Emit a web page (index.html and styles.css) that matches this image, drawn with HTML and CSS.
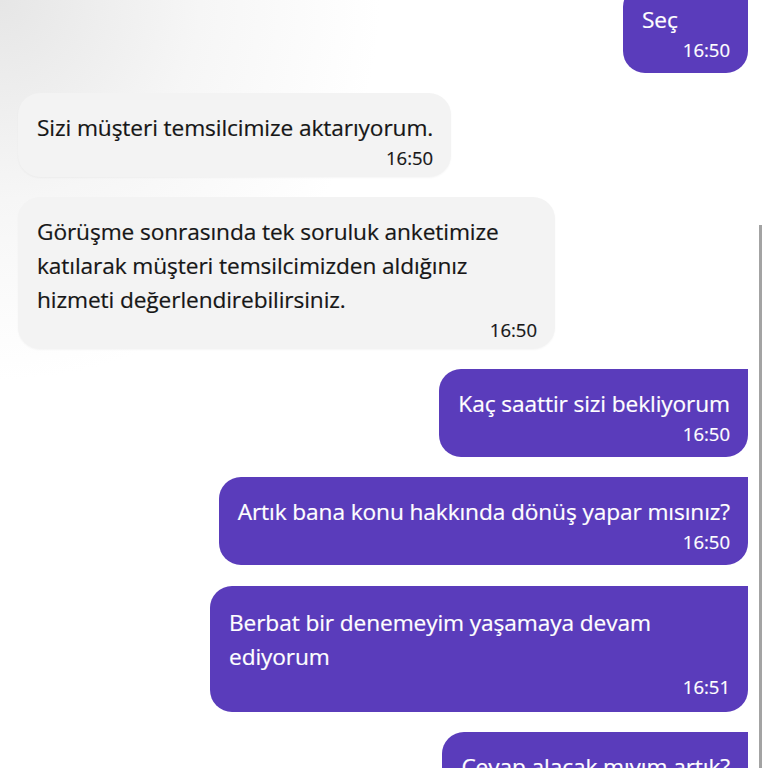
FILE: index.html
```html
<!DOCTYPE html>
<html lang="tr">
<head>
<meta charset="utf-8">
<title>Sohbet</title>
<link rel="stylesheet" href="styles.css">
</head>
<body>
<div class="chat">
  <div class="msg sent">
    <div class="bubble short"><p class="text">Seç</p><div class="time">16:50</div></div>
  </div>
  <div class="msg recv">
    <div class="bubble"><p class="text">Sizi müşteri temsilcimize aktarıyorum.</p><div class="time">16:50</div></div>
  </div>
  <div class="msg recv">
    <div class="bubble wide-recv"><p class="text">Görüşme sonrasında tek soruluk anketimize katılarak müşteri temsilcimizden aldığınız hizmeti değerlendirebilirsiniz.</p><div class="time">16:50</div></div>
  </div>
  <div class="msg sent">
    <div class="bubble"><p class="text">Kaç saattir sizi bekliyorum</p><div class="time">16:50</div></div>
  </div>
  <div class="msg sent">
    <div class="bubble"><p class="text">Artık bana konu hakkında dönüş yapar mısınız?</p><div class="time">16:50</div></div>
  </div>
  <div class="msg sent">
    <div class="bubble wide-sent"><p class="text">Berbat bir denemeyim yaşamaya devam ediyorum</p><div class="time">16:51</div></div>
  </div>
  <div class="msg sent">
    <div class="bubble"><p class="text">Cevap alacak mıyım artık?</p><div class="time">16:51</div></div>
  </div>
</div>
<div class="scrollbar"></div>
</body>
</html>
```

FILE: styles.css
```css
html, body {
  margin: 0;
  padding: 0;
  height: 100%;
  overflow: hidden;
}
body {
  background: radial-gradient(circle at 0 0, #e6e6e6 0, #f6f6f6 200px, #ffffff 380px);
  font-family: "Open Sans", "Noto Sans", "Liberation Sans", sans-serif;
  position: relative;
}
.chat {
  display: flex;
  flex-direction: column;
  gap: 20px;
  padding: 0 20px 0 18px;
  margin-top: -15px;
}
.msg {
  display: flex;
}
.msg.sent {
  justify-content: flex-end;
}
.msg.recv {
  justify-content: flex-start;
}
.bubble {
  border-radius: 22px;
  padding: 18px 18px 10px 19px;
  box-sizing: border-box;
}
.bubble.short {
  min-width: 125px;
}
.sent .bubble {
  background: #5a3cbb;
  color: #ffffff;
  border-top-right-radius: 0;
}
.recv .bubble {
  background: #f3f3f3;
  color: #161616;
  padding-bottom: 6px;
  box-shadow: 0 1px 2px rgba(0, 0, 0, 0.04);
}
.wide-recv {
  width: 537px;
}
.wide-sent {
  width: 538px;
  margin-top: 1px;
  padding-top: 20px;
  padding-bottom: 12px;
}
.text {
  margin: 0;
  font-size: 22.7px;
  font-weight: 500;
  line-height: 34px;
  letter-spacing: -0.1px;
  -webkit-text-stroke: 0.2px currentColor;
}
.time {
  text-align: right;
  font-size: 18.5px;
  font-weight: 500;
  line-height: 26px;
  -webkit-text-stroke: 0.2px currentColor;
}
.scrollbar {
  position: absolute;
  left: 759px;
  top: 225px;
  width: 3px;
  height: 560px;
  background: #a3a3a3;
}
```
